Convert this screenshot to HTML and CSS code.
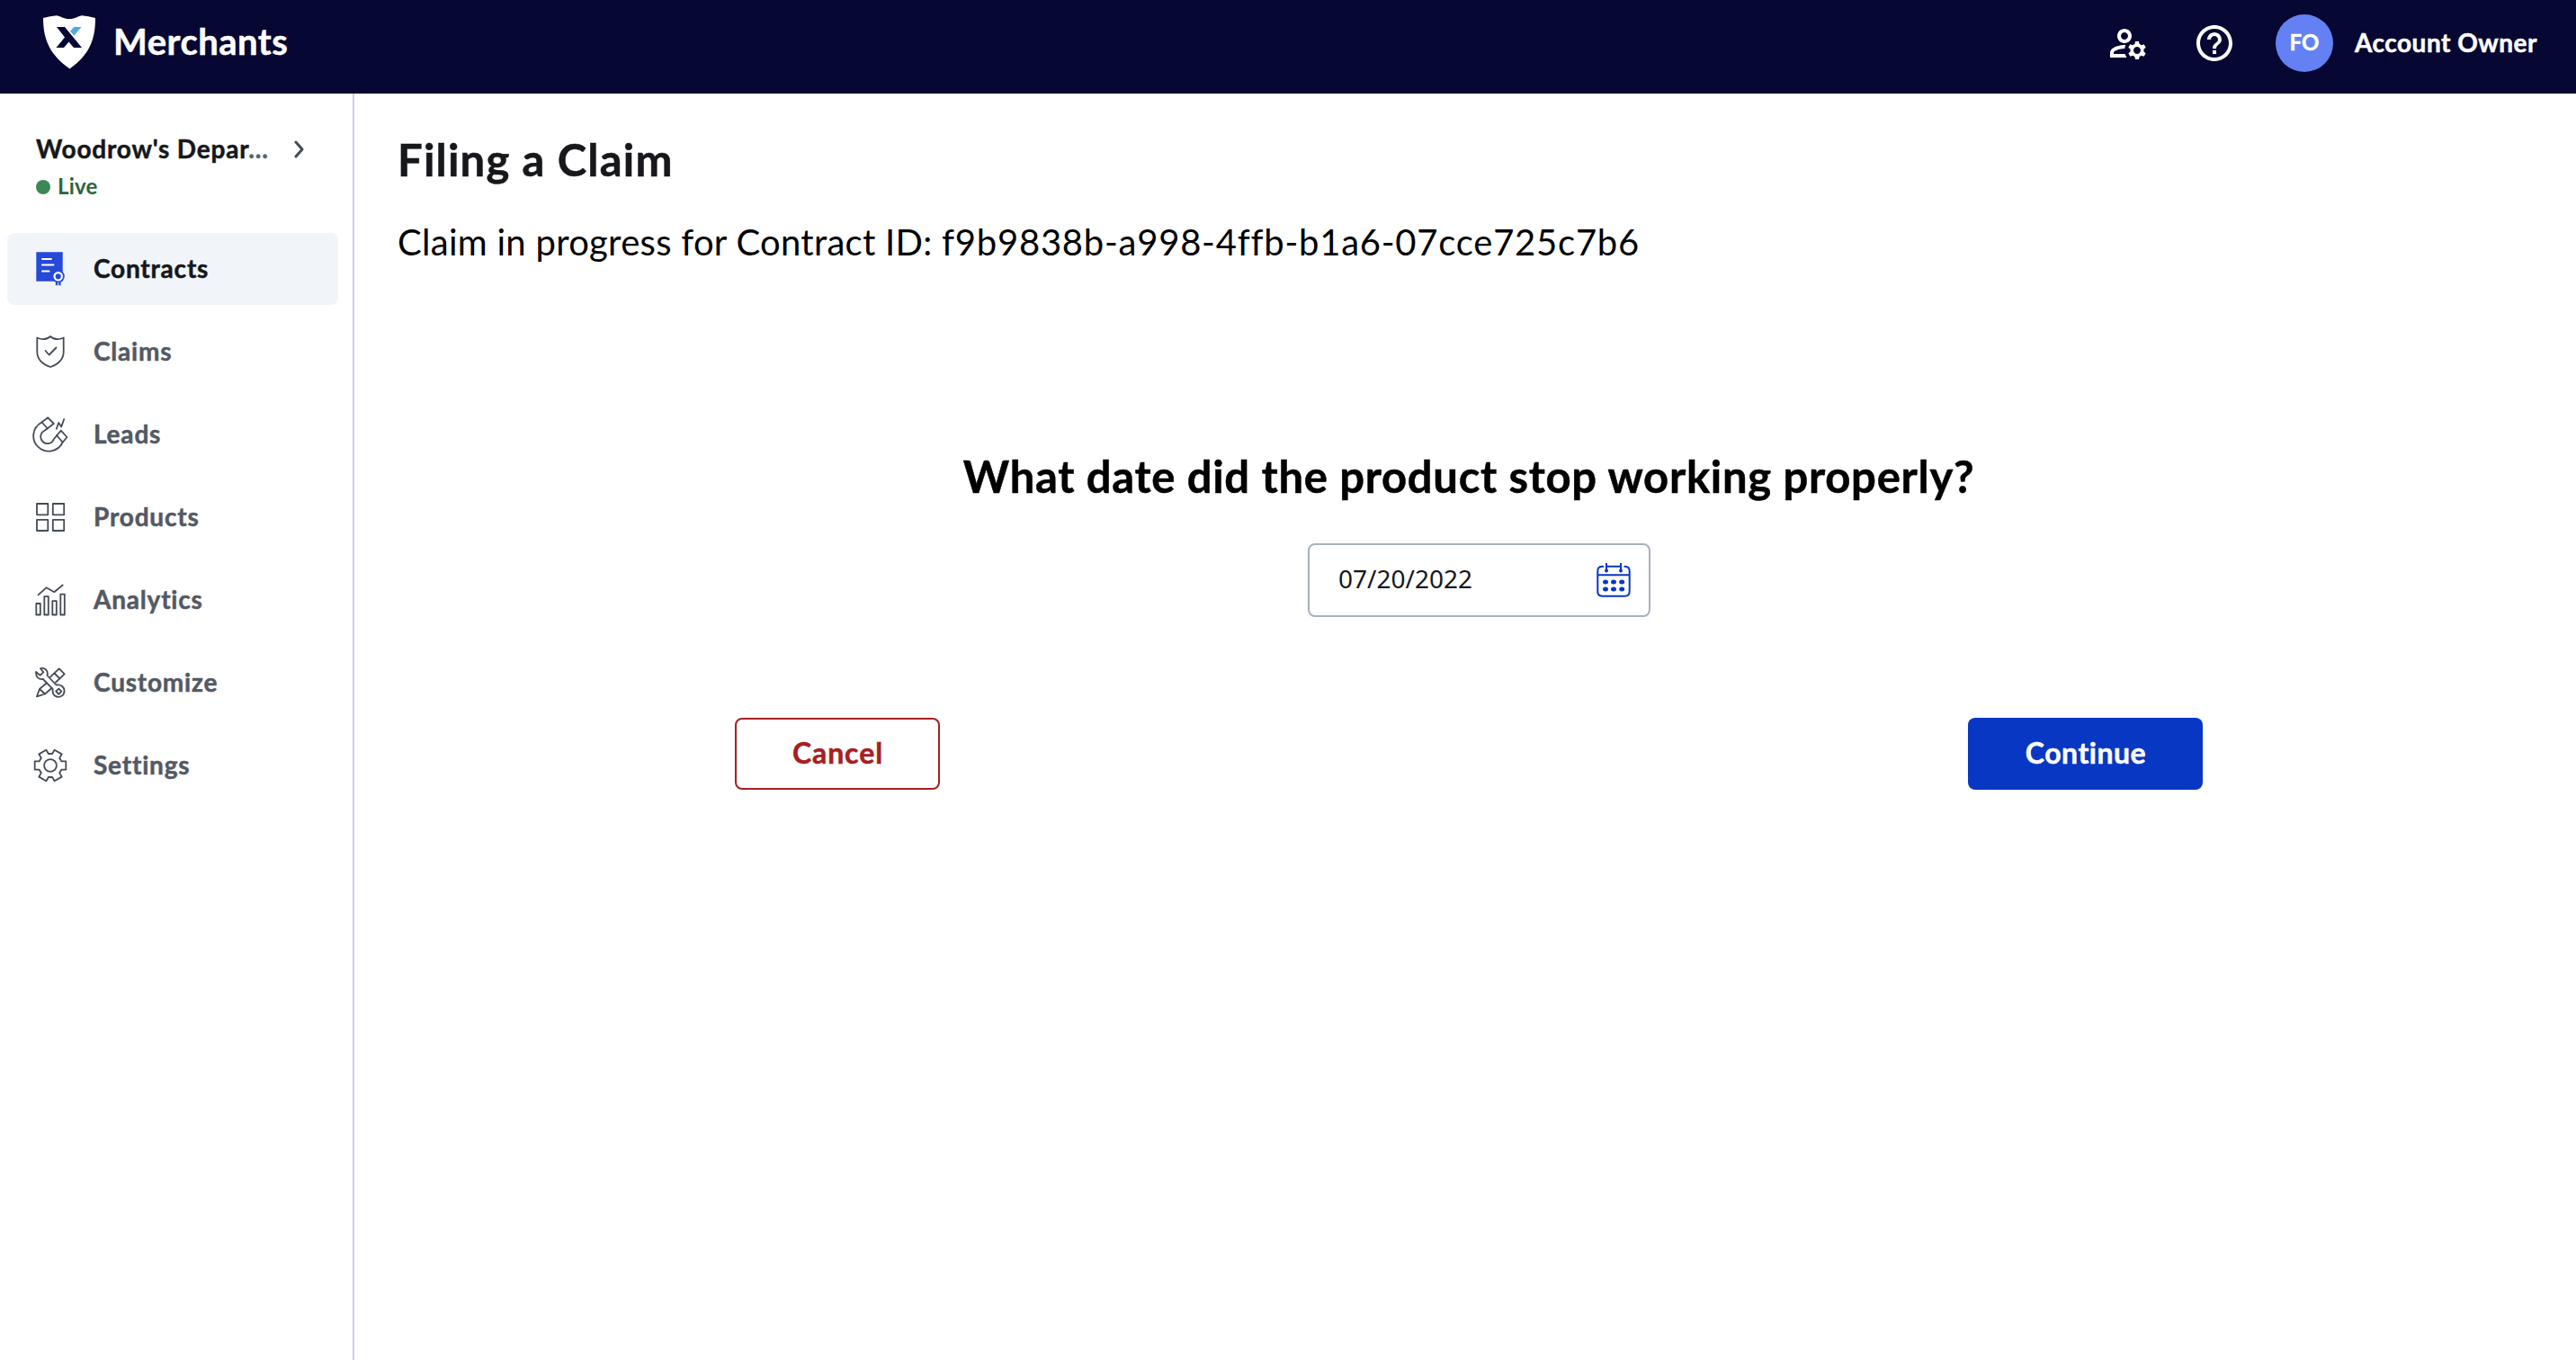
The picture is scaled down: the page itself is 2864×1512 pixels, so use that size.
FILE: index.html
```
<!DOCTYPE html>
<html lang="en">
<head>
    <meta charset="UTF-8">
    <meta name="viewport" content="width=device-width, initial-scale=1.0">
    <title>Merchants - Filing a Claim</title>
    <link rel="stylesheet" href="styles.css">
</head>
<body>
    <header class="topbar">
        <div class="brand">
            <svg class="brand-logo" viewBox="0 0 58 60">
                <path fill="#fff" d="M0 3Q8 .7 15 .2C20 1 22 4 29 4S38 1 43 .2Q50 .7 58 3C58 28 51 44 29.500 59.500C8 44 0 28 0 3Z"/>
                <path fill="#070733" d="M15 13H24L43 36H34L28.500 29.500L23 36H14.500L24 24.500Z"/>
                <path fill="#4fabe0" d="M34 13H42.500L34.500 22.500L30 17.700Z"/>
            </svg>
            <span class="brand-name">Merchants</span>
        </div>
        <div class="topbar-actions">
            <svg class="action-icon" viewBox="0 0 24 24"><path d="M4 18v-.65c0-.34.16-.66.41-.81C6.1 15.53 8.030 15 10 15c.03 0 .05 0 .08.01.1-.7.3-1.370.59-1.980-.22-.02-.44-.03-.67-.03-2.420 0-4.680.67-6.610 1.820-.88.52-1.390 1.500-1.390 2.530V20h9.260c-.42-.6-.75-1.280-.97-2H4zM10 12c2.210 0 4-1.790 4-4s-1.790-4-4-4-4 1.790-4 4 1.790 4 4 4zm0-6c1.100 0 2 .9 2 2s-.9 2-2 2-2-.9-2-2 .9-2 2-2zM20.750 16c0-.22-.03-.42-.06-.63l1.140-1.010-1-1.730-1.450.49c-.32-.27-.68-.48-1.080-.63L18 11h-2l-.3 1.490c-.4.15-.76.36-1.080.63l-1.450-.49-1 1.730 1.140 1.010c-.03.21-.06.41-.06.63s.03.42.06.63l-1.140 1.010 1 1.730 1.450-.49c.32.27.68.48 1.080.63L16 21h2l.3-1.490c.4-.15.76-.36 1.080-.63l1.450.49 1-1.730-1.140-1.010c.03-.21.06-.41.06-.63zM17 18c-1.100 0-2-.9-2-2s.9-2 2-2 2 .9 2 2-.9 2-2 2z"/></svg>
            <svg class="action-icon help-icon" viewBox="0 0 24 24"><path d="M11 18h2v-2h-2v2zm1-16C6.480 2 2 6.480 2 12s4.480 10 10 10 10-4.480 10-10S17.520 2 12 2zm0 18c-4.410 0-8-3.590-8-8s3.590-8 8-8 8 3.590 8 8-3.590 8-8 8zm0-14c-2.210 0-4 1.790-4 4h2c0-1.100.9-2 2-2s2 .9 2 2c0 2-3 1.750-3 5h2c0-2.250 3-2.500 3-5 0-2.210-1.790-4-4-4z"/></svg>
            <span class="avatar">FO</span>
            <span class="account-name">Account Owner</span>
        </div>
    </header>

    <div class="layout">
        <aside class="sidebar">
            <div class="store">
                <div class="store-name">
                    <span>Woodrow's Depar<span class="dots">...</span></span>
                    <svg class="chevron" viewBox="0 0 12 20"><path d="M2 2L9 10L2 18"/></svg>
                </div>
                <div class="store-status">Live</div>
            </div>

            <nav class="menu">
                <a class="menu-item active">
                    <svg class="menu-icon-solid" viewBox="0 0 40 40">
                        <path fill="#2549d8" d="M4.300 1.300H33.700V33.700H4.300Z"/>
                        <path stroke="#fff" stroke-width="2" stroke-linecap="round" d="M11 9H21M11 15.500H23.500M11 22.500H18.500"/>
                        <path fill="#2549d8" d="M25.800 32H28.200V38.700L27 37.800L25.800 38.700ZM29.200 32H31.600V38.700L30.400 37.800L29.200 38.700Z"/>
                        <circle cx="28.700" cy="28.300" r="7" fill="#2549d8"/>
                        <circle cx="28.700" cy="28.300" r="4.200" fill="none" stroke="#fff" stroke-width="2.200"/>
                    </svg>
                    Contracts
                </a>
                <a class="menu-item">
                    <svg class="menu-icon" viewBox="0 0 40 40">
                        <path d="M5.300 4.500Q14 8.500 20 3Q26 8.500 34.700 4.500V20C34.700 28 28.500 34 20 37C11.500 34 5.300 28 5.300 20Z"/>
                        <path d="M14.500 19L18.600 23.500L26.500 15.500"/>
                    </svg>
                    Claims
                </a>
                <a class="menu-item">
                    <svg class="menu-icon" viewBox="0 0 40 40">
                        <path d="M17.300 1.300L10 6.700A17 17 0 1 0 33.500 29L38.500 23L31.700 15.700L24 25A7.600 7.600 0 1 1 13.500 15.700L23.800 8Z"/>
                        <path d="M10.500 6.500L17 13.500M27 21L33.500 28.500M26.800 13.700L29.200 7L32.200 11.500L35.200 3"/>
                    </svg>
                    Leads
                </a>
                <a class="menu-item">
                    <svg class="menu-icon" viewBox="0 0 40 40">
                        <path d="M5 5H17.300V17.300H5ZM22.800 5H35.200V17.300H22.800ZM5 22.800H17.300V35H5ZM22.800 22.800H35.200V35H22.800Z"/>
                    </svg>
                    Products
                </a>
                <a class="menu-item">
                    <svg class="menu-icon" viewBox="0 0 40 40">
                        <path d="M4.300 24H8.800V36.500H4.300ZM13.300 16.200H17.800V36.500H13.300ZM22.300 21.200H26.800V36.500H22.300ZM31.300 13.700H35.800V36.500H31.300Z"/>
                        <path d="M6.500 14.300L15.500 6.300L24.300 11.200L33.700 3.500"/>
                    </svg>
                    Analytics
                </a>
                <a class="menu-item">
                    <svg class="menu-icon" viewBox="0 0 40 40">
                        <path d="M9 4.200C14 2.500 18 7 16.500 12L26.500 22.500C32 21.500 36 25 35.500 30C35 35 29 37.500 25 34.500C23 33 22.300 30.500 22.600 27L11.800 16C8 17 3.500 14 4 8L8.500 11.800L12.300 8.300Z"/>
                        <path d="M29.300 26.600L32.400 29.700L29.300 32.800L26.200 29.700Z"/>
                        <path d="M20 13.700L29.700 4.300L35.700 10.300L26 19.500M24.500 9.500L30.500 15.500M16 20.300L8 27L5 35.300L14 32.500L21.500 26M8 27L14 32.500"/>
                    </svg>
                    Customize
                </a>
                <a class="menu-item">
                    <svg class="menu-icon" viewBox="0 0 40 40">
                        <path d="M32.300 15.300H37.300V24.700H32.300L30.200 28.300L32.700 32.600L24.600 37.300L22.100 33H17.900L15.400 37.300L7.300 32.600L9.800 28.300L7.700 24.700H2.700V15.300H7.700L9.800 11.700L7.300 7.400L15.400 2.700L17.900 7H22.100L24.600 2.700L32.700 7.400L30.200 11.700Z"/>
                        <circle cx="20" cy="20" r="6.900"/>
                    </svg>
                    Settings
                </a>
            </nav>
        </aside>

        <main class="content">
            <h1>Filing a Claim</h1>
            <p class="contract-label">Claim in progress for Contract ID: <span class="contract-id">f9b9838b-a998-4ffb-b1a6-07cce725c7b6</span></p>

            <h2>What date did the product stop working properly?</h2>
            <div class="date-field">
                <span>07/20/2022</span>
                <svg class="calendar" viewBox="0 0 40 40">
                    <path d="M9 4.700H7.500Q2.300 4.700 2.300 10V32.500Q2.300 37.700 7.500 37.700H32.500Q37.700 37.700 37.700 32.500V10Q37.700 4.700 32.500 4.700H31.500M13 4.700H27.500M2.300 14.300H37.700M12 1V9M28 1V9"/>
                    <g class="calendar-dots">
                        <circle cx="12" cy="9.500" r="2"/><circle cx="28" cy="9.500" r="2"/>
                        <ellipse cx="11" cy="22" rx="3" ry="2.500"/><ellipse cx="20" cy="22" rx="3" ry="2.500"/><ellipse cx="29.200" cy="22" rx="3" ry="2.500"/>
                        <ellipse cx="11" cy="30" rx="3" ry="2.500"/><ellipse cx="20" cy="30" rx="3" ry="2.500"/><ellipse cx="29.200" cy="30" rx="3" ry="2.500"/>
                    </g>
                </svg>
            </div>

            <div class="buttons">
                <button class="btn-cancel">Cancel</button>
                <button class="btn-continue">Continue</button>
            </div>
        </main>
    </div>
</body>
</html>
```
FILE: styles.css
```
* {
    box-sizing: border-box;
}
body {
    font-family: Lato, "Open Sans", sans-serif;
    margin: 0;
    background-color: #fff;
    color: #16181b;
    min-height: 100vh;
    display: flex;
    flex-direction: column;
}

/* Top bar */
.topbar {
    height: 104px;
    padding: 0 43px 8px 48px;
    background-color: #070733;
    color: #fff;
    display: flex;
    justify-content: space-between;
    align-items: center;
}
.brand {
    display: flex;
    align-items: center;
    gap: 20px;
}
.brand-logo {
    width: 58px;
    height: 60px;
    margin-bottom: 3px;
}
.brand-name {
    font-size: 40px;
    font-weight: 700;
    letter-spacing: 0.5px;
    line-height: 48px;
    margin-bottom: 5px;
}
.topbar-actions {
    display: flex;
    align-items: center;
}
.action-icon {
    width: 48px;
    height: 48px;
    fill: #fff;
}
.help-icon {
    margin: 0 44px 0 48px;
}
.avatar {
    width: 64px;
    height: 64px;
    border-radius: 50%;
    background-color: #6381f3;
    font-size: 24px;
    font-weight: 700;
    line-height: 62px;
    text-align: center;
}
.account-name {
    margin-left: 24px;
    padding-bottom: 3px;
    font-size: 28px;
    font-weight: 700;
    letter-spacing: 0.5px;
}
.brand-name,
.avatar,
.account-name,
.store-name,
.menu-item,
h1,
h2,
button {
    -webkit-text-stroke: 0.5px currentColor;
}

.layout {
    flex: 1;
    display: flex;
}

/* Sidebar */
.sidebar {
    width: 394px;
    border-right: 2px solid #cbcee0;
    padding: 45px 16px 0 8px;
}
.store {
    padding: 0 32px;
    height: 110px;
}
.store-name {
    display: flex;
    justify-content: space-between;
    align-items: center;
    height: 34px;
    font-size: 28px;
    font-weight: 700;
    letter-spacing: 0.8px;
    white-space: nowrap;
}
.store-name > span {
    margin-bottom: 3px;
}
.dots {
    color: #59606b;
}
.chevron {
    width: 12px;
    height: 20px;
    margin-right: 5px;
    fill: none;
    stroke: #454b57;
    stroke-width: 3;
    stroke-linecap: round;
    stroke-linejoin: round;
}
.store-status {
    display: flex;
    align-items: center;
    gap: 8px;
    height: 32px;
    margin-top: 7px;
    color: #276640;
    font-size: 24px;
    font-weight: 700;
    letter-spacing: 0.2px;
}
.store-status::before {
    content: "";
    width: 16px;
    height: 16px;
    margin-top: 4px;
    border-radius: 50%;
    background-color: #3c8754;
}
.menu {
    display: flex;
    flex-direction: column;
    gap: 12px;
}
.menu-item {
    display: flex;
    align-items: center;
    height: 80px;
    padding: 0 28px 3px;
    border-radius: 8px;
    color: #535963;
    font-size: 28px;
    font-weight: 700;
    letter-spacing: 0.8px;
}
.menu-item.active {
    background-color: #f1f5f9;
    color: #16181b;
}
.menu-item svg {
    width: 40px;
    height: 40px;
    margin: 3px 28px 0 0;
}
.menu-icon,
.menu-icon-solid {
    fill: none;
}
.menu-icon {
    stroke: #454b57;
    stroke-width: 1.8;
    stroke-linejoin: round;
    stroke-linecap: round;
}

/* Claim form */
.content {
    flex: 1;
    padding: 43px 40px 0 48px;
    display: flex;
    flex-direction: column;
    align-items: center;
}
h1,
h2 {
    margin: 0;
    font-size: 49px;
    font-weight: 700;
    line-height: 60px;
}
h1 {
    align-self: flex-start;
    letter-spacing: 1.2px;
}
h2 {
    color: #000;
    letter-spacing: 0.7px;
}
.contract-label {
    align-self: flex-start;
    margin: 37px 0 205px;
    color: #000;
    font-size: 40px;
    line-height: 50px;
    letter-spacing: 0.28px;
}
.contract-id {
    letter-spacing: 0.76px;
}
.date-field {
    display: flex;
    justify-content: space-between;
    align-items: center;
    width: 381px;
    height: 82px;
    margin: 45px 0 112px 23px;
    padding: 0 19px 0 32px;
    border: 2px solid #a9b0bf;
    border-radius: 8px;
    font-family: "Noto Sans", sans-serif;
    font-size: 28px;
}
.date-field span {
    padding-bottom: 4px;
}
.calendar {
    width: 40px;
    height: 40px;
    fill: none;
    stroke: #0837c4;
    stroke-width: 2;
}
.calendar-dots {
    fill: #0837c4;
    stroke: none;
}
.buttons {
    display: flex;
    justify-content: space-between;
    width: 1632px;
}
button {
    height: 80px;
    padding: 0 0 4px 1px;
    border-radius: 8px;
    font-family: inherit;
    font-size: 32px;
    font-weight: 700;
}
.btn-cancel {
    width: 228px;
    background-color: #fff;
    border: 2px solid #a52022;
    color: #a52022;
    letter-spacing: 0.9px;
}
.btn-continue {
    width: 261px;
    background-color: #0837c4;
    border: none;
    color: #fff;
    letter-spacing: 0.5px;
}
```
